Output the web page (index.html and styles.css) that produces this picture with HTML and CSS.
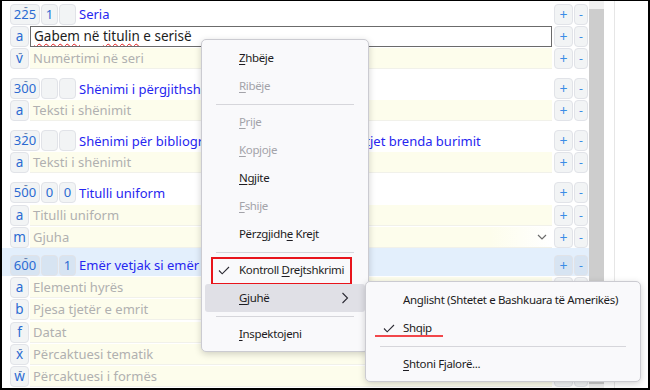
FILE: index.html
```html
<!DOCTYPE html>
<html lang="sq">
<head>
    <meta charset="UTF-8">
    <title>Redaktori i regjistrimit</title>
    <link rel="stylesheet" href="styles.css">
</head>
<body>
    <div class="screen">
        <div class="fields">

            <div class="field first">
                <div class="row head">
                    <span class="box tag">2<span class="rep">2</span>5</span>
                    <span class="box ind">1</span>
                    <span class="box ind"></span>
                    <span class="title">Seria</span>
                    <span class="box btn plus">+</span><span class="box btn minus">-</span>
                </div>
                <div class="row">
                    <span class="box code">a</span>
                    <span class="val edit"><span class="typo">Gabem</span> në <span class="typo">titulin</span> e serisë</span>
                    <span class="box btn plus">+</span><span class="box btn minus">-</span>
                </div>
                <div class="row">
                    <span class="box code"><span class="rep">v</span></span>
                    <span class="val">Numërtimi në seri</span>
                    <span class="box btn plus">+</span><span class="box btn minus">-</span>
                </div>
            </div>

            <div class="field">
                <div class="row head">
                    <span class="box tag">3<span class="rep">0</span>0</span>
                    <span class="box ind"></span>
                    <span class="box ind"></span>
                    <span class="title">Shënimi i përgjithshëm</span>
                    <span class="box btn plus">+</span><span class="box btn minus">-</span>
                </div>
                <div class="row">
                    <span class="box code">a</span>
                    <span class="val">Teksti i shënimit</span>
                    <span class="box btn plus">+</span><span class="box btn minus">-</span>
                </div>
            </div>

            <div class="field">
                <div class="row head">
                    <span class="box tag">3<span class="rep">2</span>0</span>
                    <span class="box ind"></span>
                    <span class="box ind"></span>
                    <span class="title">Shënimi për bibliografinë, treguesit të përmbajtjet brenda burimit</span>
                    <span class="box btn plus">+</span><span class="box btn minus">-</span>
                </div>
                <div class="row">
                    <span class="box code">a</span>
                    <span class="val">Teksti i shënimit</span>
                    <span class="box btn plus">+</span><span class="box btn minus">-</span>
                </div>
            </div>

            <div class="field">
                <div class="row head">
                    <span class="box tag">5<span class="rep">0</span>0</span>
                    <span class="box ind">0</span>
                    <span class="box ind">0</span>
                    <span class="title">Titulli uniform</span>
                    <span class="box btn plus">+</span><span class="box btn minus">-</span>
                </div>
                <div class="row">
                    <span class="box code">a</span>
                    <span class="val">Titulli uniform</span>
                    <span class="box btn plus">+</span><span class="box btn minus">-</span>
                </div>
                <div class="row">
                    <span class="box code">m</span>
                    <span class="val select">
                        <span>Gjuha</span>
                        <svg class="caret" width="10" height="6" viewBox="0 0 10 6"><polyline points="1,1 5,5 9,1" fill="none" stroke="#6b6b6b" stroke-width="1.2"/></svg>
                    </span>
                    <span class="box btn plus">+</span><span class="box btn minus">-</span>
                </div>
            </div>

            <div class="field current">
                <div class="row head">
                    <span class="box tag">6<span class="rep">0</span>0</span>
                    <span class="box ind"></span>
                    <span class="box ind">1</span>
                    <span class="title">Emër vetjak si emër i subjektit</span>
                    <span class="box btn plus">+</span><span class="box btn minus">-</span>
                </div>
                <div class="row">
                    <span class="box code">a</span>
                    <span class="val">Elementi hyrës</span>
                    <span class="box btn plus">+</span><span class="box btn minus">-</span>
                </div>
                <div class="row">
                    <span class="box code">b</span>
                    <span class="val">Pjesa tjetër e emrit</span>
                    <span class="box btn plus">+</span><span class="box btn minus">-</span>
                </div>
                <div class="row">
                    <span class="box code">f</span>
                    <span class="val">Datat</span>
                    <span class="box btn plus">+</span><span class="box btn minus">-</span>
                </div>
                <div class="row">
                    <span class="box code"><span class="rep">x</span></span>
                    <span class="val">Përcaktuesi tematik</span>
                    <span class="box btn plus">+</span><span class="box btn minus">-</span>
                </div>
                <div class="row">
                    <span class="box code"><span class="rep">w</span></span>
                    <span class="val">Përcaktuesi i formës</span>
                    <span class="box btn plus">+</span><span class="box btn minus">-</span>
                </div>
            </div>

        </div>

        <div class="scrollbar"><div class="thumb"></div></div>
        <div class="gutter"></div>

        <!-- menyja e kontekstit -->
        <div class="menu main-menu">
            <div class="item"><u>Z</u>hbëje</div>
            <div class="item off"><u>R</u>ibëje</div>
            <div class="sep"></div>
            <div class="item off"><u>P</u>rije</div>
            <div class="item off"><u>K</u>opjoje</div>
            <div class="item"><u>N</u>gjite</div>
            <div class="item off"><u>F</u>shije</div>
            <div class="item">Përzgjidh<u>e</u> Krejt</div>
            <div class="sep"></div>
            <div class="item marked">
                <svg class="check" width="12" height="9" viewBox="0 0 12 9"><polyline points="1,4.5 4.2,7.8 11,1" fill="none" stroke="#2b2a33" stroke-width="1.1"/></svg>
                Kontroll <u>D</u>rejtshkrimi
            </div>
            <div class="item hover">
                <u>G</u>juhë
                <svg class="arrow" width="8" height="12" viewBox="0 0 8 12"><polyline points="1.5,1 6.5,6 1.5,11" fill="none" stroke="#2b2a33" stroke-width="1.1"/></svg>
            </div>
            <div class="sep"></div>
            <div class="item"><u>I</u>nspektojeni</div>
        </div>

        <div class="menu sub-menu">
            <div class="item">Anglisht (Shtetet e Bashkuara të Amerikës)</div>
            <div class="item chosen">
                <svg class="check" width="12" height="9" viewBox="0 0 12 9"><polyline points="1,4.5 4.2,7.8 11,1" fill="none" stroke="#2b2a33" stroke-width="1.1"/></svg>
                Shqip
            </div>
            <div class="sep"></div>
            <div class="item"><u>S</u>htoni Fjalorë...</div>
        </div>
    </div>
</body>
</html>
```

FILE: styles.css
```css
* {
    box-sizing: border-box;
}

body {
    margin: 0;
    background-color: #fff;
    font-family: "Noto Sans", "Open Sans", sans-serif;
}

.screen {
    position: relative;
    display: flex;
    width: 650px;
    height: 390px;
    border: 2px solid #000;
    border-top-width: 1px;
    overflow: hidden;
    background-color: #fff;
}

.fields {
    width: 587px;
    padding-top: 2px;
}

.field {
    padding-top: 7.5px;
}

.field.first,
.field.current {
    padding-top: 0;
}

.field.current .head {
    height: 28px;
    padding-top: 6px;
    background-color: #e3effc;
}

.row {
    display: flex;
    align-items: center;
    gap: 1px;
    height: 22.3px;
    padding: 0 1px 0 8px;
}

.box {
    display: block;
    flex-shrink: 0;
    height: 21px;
    border: 1px solid #e1e3e8;
    border-radius: 4px;
    background-color: rgba(40, 60, 90, 0.06);
    color: #2b6bd2;
    font-size: 13px;
    line-height: 19px;
    text-align: center;
}

.tag {
    width: 30px;
}

.ind {
    width: 17px;
}

.code {
    width: 19px;
    font-size: 13.5px;
}

.btn.plus {
    width: 19px;
    margin-left: 1px;
    color: #3b8de6;
    font-size: 14px;
}

.btn.minus {
    width: 14px;
    color: #3b8de6;
    font-size: 12px;
}

.rep {
    position: relative;
}

.rep::before {
    content: "···";
    position: absolute;
    left: 50%;
    top: -2px;
    transform: translateX(-50%);
    font-size: 9px;
    letter-spacing: -1.5px;
    line-height: 1;
    color: #5a77aa;
}

.code .rep::before {
    top: 0;
}

.title {
    flex: 1;
    margin-left: 2px;
    color: #2626f0;
    font-size: 13px;
    white-space: nowrap;
    overflow: hidden;
}

.val {
    flex: 1;
    height: 21px;
    padding-left: 3px;
    background-color: #fdfdec;
    border-bottom: 1px solid #f1f1ea;
    color: #b0b0b0;
    font-size: 13px;
    line-height: 20px;
    white-space: nowrap;
    overflow: hidden;
}

.val.edit {
    background-color: #fff;
    border: 1px solid #6b6b6b;
    line-height: 19px;
    font-size: 13.5px;
    color: #1c1c1c;
}

.val.select {
    display: flex;
    align-items: center;
    justify-content: space-between;
    padding-right: 5px;
    background: linear-gradient(to right, #fdfdec 88%, #fff 100%);
}

.typo {
    text-decoration: underline wavy #e21c1c;
    text-decoration-thickness: 1px;
    text-underline-offset: 2px;
}

.scrollbar {
    width: 15px;
    padding: 8px 0 4px;
    background-color: #f0f0f0;
}

.thumb {
    height: 100%;
    background-color: #cdcdcd;
}

.gutter {
    width: 11px;
    border-right: 1px solid #e6e6e6;
}

.menu {
    position: absolute;
    padding: 4px 0 3px;
    background-color: #f9f9fb;
    border: 1px solid #cbcbd1;
    border-radius: 5px;
    box-shadow: 0 2px 7px rgba(0, 0, 0, 0.18);
    font-size: 11.5px;
    letter-spacing: -0.35px;
    color: #1d1c22;
}

.main-menu {
    left: 199px;
    top: 38px;
    width: 168px;
}

.sub-menu {
    left: 363px;
    top: 280px;
    width: 276px;
}

.item {
    position: relative;
    height: 28px;
    margin: 0 3px;
    padding-left: 34px;
    border-radius: 3px;
    line-height: 28px;
    white-space: nowrap;
}

.item u {
    text-underline-offset: 2px;
}

.item.off {
    color: #a3a3a9;
}

.item.hover {
    background-color: #e0e0e6;
}

.sep {
    display: flex;
    align-items: center;
    height: 8px;
    margin: 0 14px;
}

.sep::before {
    content: "";
    flex: 1;
    height: 1px;
    background-color: #d6d6db;
}

.check {
    position: absolute;
    left: 13px;
    top: 10px;
}

.sub-menu .check {
    left: 14px;
}

.arrow {
    position: absolute;
    right: 16px;
    top: 8px;
}

.item.marked::after {
    content: "";
    position: absolute;
    left: 6px;
    top: 1px;
    width: 137px;
    height: 24px;
    border: 2px solid #e8141b;
}

.item.chosen::after {
    content: "";
    position: absolute;
    left: 6px;
    top: 21px;
    width: 68px;
    height: 2px;
    background-color: #f2474b;
}
```
